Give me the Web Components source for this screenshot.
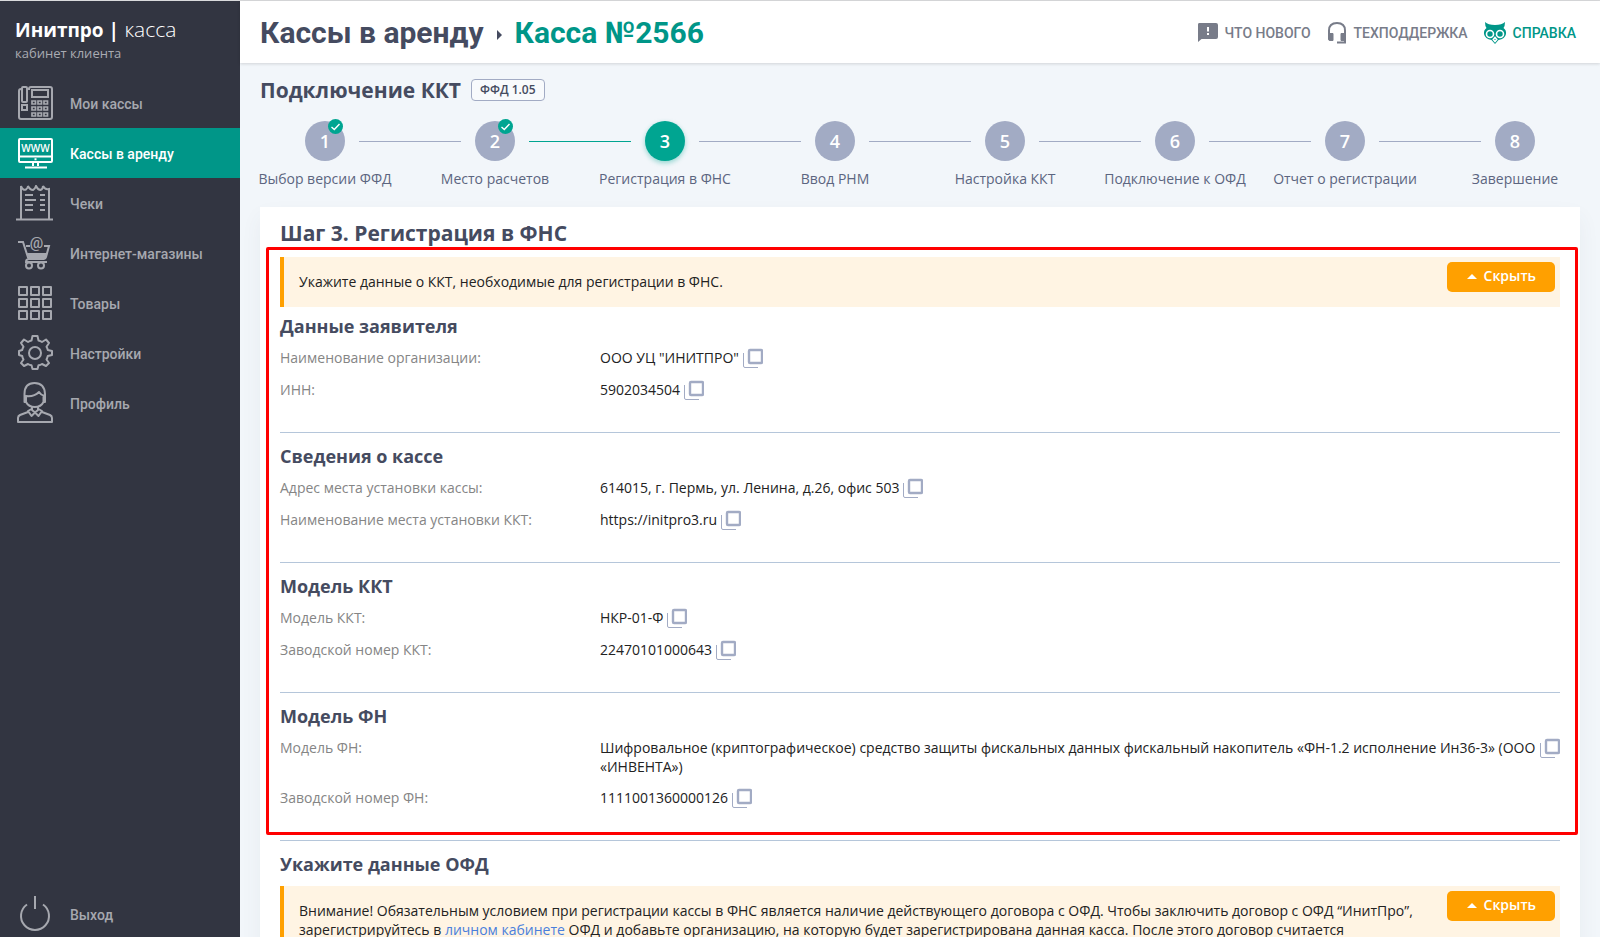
<!DOCTYPE html>
<html lang="ru">
<head>
<meta charset="utf-8">
<meta name="viewport" content="width=device-width, initial-scale=1">
<title>Инитпро | касса</title>
<style>
  html, body {
    height: 100%;
  }

  body {
    margin: 0;
    font: 14px/20px "Open Sans", "Noto Sans", sans-serif;
    color: #222;
    --green: #00a591;
    --teal: #009688;
    --slate: #454b60;
    --steel: #a2abc4;
    --orange: #ffa000;
  }
</style>
</head>
<body>
<kassa-app>
  <kassa-sidebar slot="sidebar">
    <nav-item icon="phone">Мои кассы</nav-item>
    <nav-item icon="www" active>Кассы в аренду</nav-item>
    <nav-item icon="receipt">Чеки</nav-item>
    <nav-item icon="cart">Интернет-магазины</nav-item>
    <nav-item icon="grid">Товары</nav-item>
    <nav-item icon="gear">Настройки</nav-item>
    <nav-item icon="user">Профиль</nav-item>
    <nav-item icon="power" slot="bottom">Выход</nav-item>
  </kassa-sidebar>

  <page-header slot="header">
    <a slot="parent" href="#kassy">Кассы в аренду</a>
    <span slot="current">Касса №2566</span>
    <header-link icon="news">ЧТО НОВОГО</header-link>
    <header-link icon="support">ТЕХПОДДЕРЖКА</header-link>
    <header-link icon="owl" accent>СПРАВКА</header-link>
  </page-header>

  <page-title badge="ФФД 1.05">Подключение ККТ</page-title>

  <step-list>
    <step-item number="1" done>Выбор версии ФФД</step-item>
    <step-item number="2" done before-current>Место расчетов</step-item>
    <step-item number="3" current>Регистрация в ФНС</step-item>
    <step-item number="4">Ввод РНМ</step-item>
    <step-item number="5">Настройка ККТ</step-item>
    <step-item number="6">Подключение к ОФД</step-item>
    <step-item number="7">Отчет о регистрации</step-item>
    <step-item number="8">Завершение</step-item>
  </step-list>

  <step-card heading="Шаг 3. Регистрация в ФНС">
    <marked-area>
      <info-note>Укажите данные о ККТ, необходимые для регистрации в ФНС.</info-note>
      <data-section heading="Данные заявителя" first>
        <data-row label="Наименование организации:">ООО УЦ "ИНИТПРО"</data-row>
        <data-row label="ИНН:">5902034504</data-row>
      </data-section>
      <data-section heading="Сведения о кассе">
        <data-row label="Адрес места установки кассы:">614015, г. Пермь, ул. Ленина, д.26, офис 503</data-row>
        <data-row label="Наименование места установки ККТ:">https://initpro3.ru</data-row>
      </data-section>
      <data-section heading="Модель ККТ">
        <data-row label="Модель ККТ:">НКР-01-Ф</data-row>
        <data-row label="Заводской номер ККТ:">22470101000643</data-row>
      </data-section>
      <data-section heading="Модель ФН">
        <data-row label="Модель ФН:">Шифровальное (криптографическое) средство защиты фискальных данных фискальный накопитель «ФН-1.2 исполнение Ин36-3» (ООО «ИНВЕНТА»)</data-row>
        <data-row label="Заводской номер ФН:">1111001360000126</data-row>
      </data-section>
    </marked-area>
    <data-section heading="Укажите данные ОФД">
      <info-note>Внимание! Обязательным условием при регистрации кассы в ФНС является наличие действующего договора с ОФД. Чтобы заключить договор с ОФД “ИнитПро”, зарегистрируйтесь в <a href="#ofd">личном кабинете</a> ОФД и добавьте организацию, на которую будет зарегистрирована данная касса. После этого договор считается</info-note>
    </data-section>
  </step-card>
</kassa-app>

<script>
/**
 * Icons by name. Stroked with currentColor unless stated otherwise.
 */
const icons = {
  phone: `<svg width="36" height="36" viewBox="0 0 36 36" fill="none" stroke="currentColor" stroke-width="2">
    <path d="M4 4H3Q1 4 1 6V32Q1 34 3 34H32Q34 34 34 32V4Q34 2 32 2H13Q11 2 11 4H9"/>
    <rect x="4" y="2" width="5" height="15" rx="1"/><rect x="4" y="20" width="5" height="5"/>
    <rect x="14" y="5" width="16" height="7"/>
    <path stroke-width="1.700" d="M14 16h3.500v3H14zM20 16h3.500v3H20zM26 16h3.500v3H26zM14 22h3.500v3H14zM20 22h3.500v3H20zM26 22h3.500v3H26zM14 28h3.500v3H14zM20 28h3.500v3H20zM26 28h3.500v3H26z"/></svg>`,
  www: `<svg width="36" height="36" viewBox="0 0 36 36" fill="none" stroke="currentColor" stroke-width="2">
    <rect x="1" y="4" width="33" height="23" rx="1"/><path d="M1 21.500H34M15 27v4M20 27v4M7 32.500H29M16.500 24.300h2"/>
    <text x="17.500" y="17" text-anchor="middle" font-family="Open Sans, sans-serif" font-size="10" font-weight="600" fill="currentColor" stroke="none">WWW</text></svg>`,
  receipt: `<svg width="38" height="36" viewBox="0 0 38 36" fill="none" stroke="currentColor" stroke-width="2">
    <path d="M5 34V1Q7 6 10 4.500Q12 3 12 1Q14 5 17 5Q19 4 20 1Q22 5 24.500 5Q27 4 27 1Q29 5 33 4V34M0 34.500H37"/>
    <path d="M9 10h8M24 10h5M9 15h11M24 15h5M9 20h8M24 20h5M9 25h8M24 25h5"/></svg>`,
  cart: `<svg width="36" height="36" viewBox="0 0 36 36" fill="none" stroke="currentColor" stroke-width="2">
    <path d="M0 7H5L10.500 24M8 11H12M26 11H31L28 22Q27.500 24 26 24H11Q8 24 8 27H29"/>
    <path fill="currentColor" stroke="none" d="M9 18H29.500L27.500 24H11z"/>
    <circle cx="11" cy="30.500" r="3"/><circle cx="23" cy="30.500" r="3"/>
    <text x="18.500" y="13" text-anchor="middle" font-family="Roboto, sans-serif" font-size="15" font-weight="500" fill="currentColor" stroke="none">@</text></svg>`,
  grid: `<svg width="36" height="36" viewBox="0 0 36 36" fill="none" stroke="currentColor" stroke-width="2">
    <path stroke-linejoin="round" d="M1 2h8v8H1zM13 2h8v8h-8zM25 2h8v8h-8zM1 14h8v8H1zM13 14h8v8h-8zM25 14h8v8h-8zM1 26h8v8H1zM13 26h8v8h-8zM25 26h8v8h-8z"/></svg>`,
  gear: `<svg width="36" height="36" viewBox="0 0 36 36" fill="none" stroke="currentColor" stroke-width="2" stroke-linejoin="round">
    <path d="M14.500 1H19.500L20.500 5.500Q22.500 6 24 7L28 4.500 31 8 28.500 11.800Q29.500 13.500 29.800 15L34 16V20L29.800 21Q29.300 23 28.500 24.500L31 28 28 31 24 29Q22.500 30 20.500 30.300L19.500 34H14.500L13.500 30.300Q11.500 30 10 29L6 31 3 28 5.500 24.500Q4.500 23 4.200 21L1 20V16L4.200 15Q4.500 13.500 5.500 11.800L3 8 6 4.500 10 7Q11.500 6 13.500 5.500z"/>
    <circle cx="17" cy="18" r="6"/></svg>`,
  user: `<svg width="38" height="42" viewBox="0 0 38 42" fill="none" stroke="currentColor" stroke-width="2" stroke-linejoin="round">
    <path d="M8.500 20V12Q8.500 1 18.500 1T29 12V20M10 20V14Q18 15 23 10Q25 13 27.500 13.500V20Q25 25 18.800 25T10 20M8.500 14V20L10 20M29 14V20L27.500 20"/>
    <path d="M16 24.500V28L19 30.500 22 28V24.500M15.500 27L12 29 15.500 34 19 30.500 22.500 34 26 29 22.500 27M12 30L4 33Q2 34 2 36V40H36V36Q36 34 34 33L26 30"/></svg>`,
  power: `<svg width="36" height="36" viewBox="0 0 36 36" fill="none" stroke="currentColor" stroke-width="2">
    <path d="M17 0V13M9 8.500A14 14 0 1 0 25 8.500"/></svg>`,
  news: `<svg width="22" height="22" viewBox="0 0 22 22" fill="currentColor">
    <path fill-rule="evenodd" d="M2 1H19Q21 1 21 3V15Q21 17 19 17H4.500L1 20V2.500Q1 1 2 1zM10 5V9.500H12V5zM10 11V13H12V11z"/></svg>`,
  support: `<svg width="22" height="24" viewBox="0 0 22 24" fill="none" stroke="currentColor" stroke-width="2">
    <path d="M3 13V9.500Q3 2 11 2T19 9.500V21.500H11"/>
    <path fill="currentColor" stroke-width="1" d="M2.500 12.500H7V19.500H4Q2.500 19.500 2.500 18zM15 12.500H19.500V19.500H15z"/></svg>`,
  owl: `<svg width="24" height="24" viewBox="0 0 24 24" fill="currentColor">
    <path d="M2 1Q5 4 12 4T22 1Q22 5 20.500 7Q23.500 9 23 13Q22 18 15.500 19L12 23 8.500 19Q2 18 1 13Q.500 9 3.500 7Q2 5 2 1z"/>
    <g fill="none" stroke="#fff" stroke-width="1.600"><circle cx="7" cy="13" r="3.500"/><circle cx="17" cy="13" r="3.500"/><path d="M12 16.500L10.300 18.500 12 20.500 13.700 18.500z"/></g></svg>`
}

// The frame: sidebar on the left, header and scrolling content on the right
const appTemplate = document.createElement('template')
appTemplate.innerHTML = `
<style>
  :host {
    display: grid;
    grid-template-columns: 240px minmax(0, 1fr);
    height: 100vh;
    box-sizing: border-box;
    border-top: 1px solid #d9dadc;
  }

  .page {
    display: flex;
    flex-direction: column;
    min-height: 0;
    background: #f2f6fa;
  }

  main {
    flex: 1;
    min-height: 0;
    overflow: auto;
    scrollbar-width: none;
  }
</style>
<slot name="sidebar"></slot>
<div class="page">
  <slot name="header"></slot>
  <main><slot></slot></main>
</div>
`
customElements.define('kassa-app',
  class extends HTMLElement {
    constructor () {
      super()
      this.attachShadow({ mode: 'open' }).appendChild(appTemplate.content.cloneNode(true))
    }
  }
)

const sidebarTemplate = document.createElement('template')
sidebarTemplate.innerHTML = `
<style>
  :host {
    display: flex;
    flex-direction: column;
    background: #323541;
    color: #fff;
  }

  .brand {
    padding: 15px;
  }

  .name {
    font-size: 21px;
    font-weight: 300;
    line-height: 26px;
  }

  .name b {
    font-size: 19px;
    font-weight: 700;
  }

  .sub {
    font-size: 13px;
    line-height: 20px;
    color: #a9abb2;
  }

  nav {
    flex: 1;
    display: flex;
    flex-direction: column;
  }

  .bottom {
    margin-top: auto;
  }
</style>
<div class="brand">
  <div class="name"><b>Инитпро |</b> касса</div>
  <div class="sub">кабинет клиента</div>
</div>
<nav>
  <slot></slot>
  <div class="bottom"><slot name="bottom"></slot></div>
</nav>
`
customElements.define('kassa-sidebar',
  class extends HTMLElement {
    constructor () {
      super()
      this.attachShadow({ mode: 'open' }).appendChild(sidebarTemplate.content.cloneNode(true))
    }
  }
)

const navItemTemplate = document.createElement('template')
navItemTemplate.innerHTML = `
<style>
  :host {
    display: block;
  }

  a {
    display: grid;
    grid-template-columns: 38px 1fr;
    gap: 16px;
    align-items: center;
    height: 50px;
    padding-left: 16px;
    font: 500 14px/20px Roboto, sans-serif;
    color: #a6a8af;
    text-decoration: none;
  }

  :host([slot="bottom"]) a {
    height: 46px;
  }

  :host([active]) a {
    background: var(--teal);
    color: #fff;
  }

  .icon {
    display: flex;
    padding-left: 2px;
  }

  :host([icon="receipt"]) .icon, :host([icon="user"]) .icon {
    padding-left: 0;
  }

  .text {
    padding-top: 2px;
  }
</style>
<a href="#"><span class="icon"></span><span class="text"><slot></slot></span></a>
`
customElements.define('nav-item',
  class extends HTMLElement {
    constructor () {
      super()
      this.attachShadow({ mode: 'open' }).appendChild(navItemTemplate.content.cloneNode(true))
    }

    connectedCallback () {
      this.shadowRoot.querySelector('.icon').innerHTML = icons[this.getAttribute('icon')]
    }
  }
)

const headerTemplate = document.createElement('template')
headerTemplate.innerHTML = `
<style>
  :host {
    display: block;
    position: relative;
    background: #fff;
    box-shadow: 0 1px 3px rgba(0, 0, 0, .14);
  }

  header {
    display: flex;
    align-items: center;
    justify-content: space-between;
    height: 60px;
    padding: 2px 24px 0 20px;
  }

  h1 {
    display: flex;
    align-items: center;
    gap: 13px;
    margin: 0;
    font: 700 30px/40px Roboto, sans-serif;
    color: var(--teal);
  }

  .arrow {
    margin-top: 4px;
    border: 5px solid transparent;
    border-left-color: var(--slate);
    border-right: 0;
  }

  ::slotted([slot="parent"]) {
    color: var(--slate);
    text-decoration: none;
  }

  nav {
    display: flex;
    gap: 15px;
  }
</style>
<header>
  <h1><slot name="parent"></slot><span class="arrow"></span><slot name="current"></slot></h1>
  <nav><slot></slot></nav>
</header>
`
customElements.define('page-header',
  class extends HTMLElement {
    constructor () {
      super()
      this.attachShadow({ mode: 'open' }).appendChild(headerTemplate.content.cloneNode(true))
    }
  }
)

const headerLinkTemplate = document.createElement('template')
headerLinkTemplate.innerHTML = `
<style>
  :host {
    display: block;
  }

  a {
    display: flex;
    align-items: center;
    gap: 6px;
    font: 500 14px/24px Roboto, sans-serif;
    color: #787c89;
    text-decoration: none;
  }

  :host([accent]) a {
    color: var(--teal);
  }

  .icon {
    display: flex;
  }
</style>
<a href="#"><span class="icon"></span><slot></slot></a>
`
customElements.define('header-link',
  class extends HTMLElement {
    constructor () {
      super()
      this.attachShadow({ mode: 'open' }).appendChild(headerLinkTemplate.content.cloneNode(true))
    }

    connectedCallback () {
      this.shadowRoot.querySelector('.icon').innerHTML = icons[this.getAttribute('icon')]
    }
  }
)

const titleTemplate = document.createElement('template')
titleTemplate.innerHTML = `
<style>
  :host {
    display: flex;
    align-items: center;
    gap: 10px;
    padding: 12px 20px 16px;
  }

  h2 {
    margin: 0;
    font-size: 21px;
    font-weight: 700;
    line-height: 30px;
    color: var(--slate);
  }

  .badge {
    border: 1px solid var(--steel);
    border-radius: 4px;
    padding: 0 8px;
    font-size: 12px;
    font-weight: 600;
    line-height: 20px;
    color: var(--slate);
    background: #f8fafc;
  }
</style>
<h2><slot></slot></h2>
<span class="badge"></span>
`
customElements.define('page-title',
  class extends HTMLElement {
    constructor () {
      super()
      this.attachShadow({ mode: 'open' }).appendChild(titleTemplate.content.cloneNode(true))
    }

    connectedCallback () {
      this.shadowRoot.querySelector('.badge').textContent = this.getAttribute('badge')
    }
  }
)

const stepListTemplate = document.createElement('template')
stepListTemplate.innerHTML = `
<style>
  :host {
    display: flex;
    padding-bottom: 18px;
  }
</style>
<slot></slot>
`
customElements.define('step-list',
  class extends HTMLElement {
    constructor () {
      super()
      this.attachShadow({ mode: 'open' }).appendChild(stepListTemplate.content.cloneNode(true))
    }
  }
)

// A step draws its circle and the half of the line on each side of it
const stepTemplate = document.createElement('template')
stepTemplate.innerHTML = `
<style>
  :host {
    flex: 1 1 0;
    min-width: 0;
    text-align: center;
    color: #5c6580;
  }

  .track {
    display: flex;
    align-items: center;
    gap: 14px;
    margin-bottom: 8px;
  }

  .line {
    flex: 1;
    height: 1px;
    background: var(--steel);
  }

  :host(:first-child) .left, :host(:last-child) .right {
    visibility: hidden;
  }

  :host([current]) .left, :host([before-current]) .right {
    background: var(--green);
  }

  .circle {
    position: relative;
    width: 40px;
    border-radius: 50%;
    background: var(--steel);
    color: #fff;
    font-size: 18px;
    font-weight: 600;
    line-height: 40px;
  }

  :host([current]) .circle {
    background: var(--green);
    box-shadow: 0 2px 5px rgba(0, 165, 145, .4);
  }

  .check {
    display: none;
    position: absolute;
    top: -2px;
    right: 2px;
  }

  :host([done]) .check {
    display: block;
  }

  .label {
    white-space: nowrap;
  }
</style>
<div class="track">
  <span class="line left"></span>
  <div class="circle"><span class="number"></span>
    <svg class="check" width="15" height="15" viewBox="0 0 15 15"><circle cx="7.500" cy="7.500" r="7.500" fill="#00a591"/><path d="M3.500 8L6.300 10.500 11.500 5" fill="none" stroke="#fff" stroke-width="1.400"/></svg>
  </div>
  <span class="line right"></span>
</div>
<div class="label"><slot></slot></div>
`
customElements.define('step-item',
  class extends HTMLElement {
    constructor () {
      super()
      this.attachShadow({ mode: 'open' }).appendChild(stepTemplate.content.cloneNode(true))
    }

    connectedCallback () {
      this.shadowRoot.querySelector('.number').textContent = this.getAttribute('number')
    }
  }
)

const cardTemplate = document.createElement('template')
cardTemplate.innerHTML = `
<style>
  :host {
    display: block;
    margin: 0 20px;
    padding: 11px 20px 20px;
    background: #fff;
    box-shadow: 0 10px 20px rgba(60, 80, 110, .06);
  }

  h2 {
    margin: 0 0 9px;
    font-size: 21px;
    font-weight: 700;
    line-height: 30px;
    color: var(--slate);
  }
</style>
<h2></h2>
<slot></slot>
`
customElements.define('step-card',
  class extends HTMLElement {
    constructor () {
      super()
      this.attachShadow({ mode: 'open' }).appendChild(cardTemplate.content.cloneNode(true))
    }

    connectedCallback () {
      this.shadowRoot.querySelector('h2').textContent = this.getAttribute('heading')
    }
  }
)

// Red frame laid over a part of the card
const markedTemplate = document.createElement('template')
markedTemplate.innerHTML = `
<style>
  :host {
    display: block;
    position: relative;
  }

  .frame {
    position: absolute;
    inset: -10px -18px 5px -14px;
    border: 3px solid #f00;
    border-radius: 2px;
    pointer-events: none;
  }
</style>
<slot></slot>
<div class="frame"></div>
`
customElements.define('marked-area',
  class extends HTMLElement {
    constructor () {
      super()
      this.attachShadow({ mode: 'open' }).appendChild(markedTemplate.content.cloneNode(true))
    }
  }
)

const noteTemplate = document.createElement('template')
noteTemplate.innerHTML = `
<style>
  :host {
    display: flex;
    align-items: flex-start;
    justify-content: space-between;
    gap: 20px;
    border-left: 4px solid var(--orange);
    padding: 5px 5px 5px 15px;
    background: #fff4e3;
    line-height: 19px;
  }

  p {
    margin: 0;
    padding: 10px 0 11px;
  }

  button {
    display: flex;
    align-items: center;
    gap: 7px;
    flex: none;
    height: 30px;
    border: 0;
    border-radius: 5px;
    padding: 0 19px 2px 20px;
    background: var(--orange);
    color: #fff;
    font: 600 14px/20px "Open Sans", sans-serif;
  }

  .up {
    border: 5px solid transparent;
    border-bottom-color: #fff;
    border-top: 0;
  }

  ::slotted(a) {
    color: #4a7fdc;
    text-decoration: none;
  }
</style>
<p><slot></slot></p>
<button type="button"><span class="up"></span>Скрыть</button>
`
customElements.define('info-note',
  class extends HTMLElement {
    #button

    constructor () {
      super()
      this.attachShadow({ mode: 'open' }).appendChild(noteTemplate.content.cloneNode(true))
      this.#button = this.shadowRoot.querySelector('button')
      this.#button.addEventListener('click', () => this.remove())
    }
  }
)

const sectionTemplate = document.createElement('template')
sectionTemplate.innerHTML = `
<style>
  :host {
    display: block;
    padding: 10px 0 32px;
    border-top: 1px solid #b5c6da;
  }

  :host([first]) {
    padding-top: 6px;
    border-top: 0;
  }

  h3 {
    margin: 0 0 9px;
    font-size: 18px;
    font-weight: 700;
    line-height: 26px;
    color: var(--slate);
  }

  .rows {
    display: grid;
    gap: 12px;
  }
</style>
<h3></h3>
<div class="rows"><slot></slot></div>
`
customElements.define('data-section',
  class extends HTMLElement {
    constructor () {
      super()
      this.attachShadow({ mode: 'open' }).appendChild(sectionTemplate.content.cloneNode(true))
    }

    connectedCallback () {
      this.shadowRoot.querySelector('h3').textContent = this.getAttribute('heading')
    }
  }
)

const rowTemplate = document.createElement('template')
rowTemplate.innerHTML = `
<style>
  :host {
    display: grid;
    grid-template-columns: 1fr 3fr;
    min-height: 20px;
    line-height: 19px;
  }

  .label {
    color: #858585;
  }

  .value {
    display: flex;
    align-items: flex-start;
    gap: 4px;
  }

  button {
    display: flex;
    flex: none;
    border: 0;
    padding: 0;
    background: none;
    color: var(--steel);
  }
</style>
<div class="label"></div>
<div class="value">
  <span><slot></slot></span>
  <button type="button" aria-label="Скопировать">
    <svg width="20" height="20" viewBox="0 0 20 20" fill="none" stroke="currentColor"><rect x="6" y="2" width="13" height="13" rx="1" stroke-width="2.400"/><path d="M.500 5V18Q.500 19.500 2 19.500H15"/></svg>
  </button>
</div>
`
customElements.define('data-row',
  class extends HTMLElement {
    constructor () {
      super()
      this.attachShadow({ mode: 'open' }).appendChild(rowTemplate.content.cloneNode(true))
      this.shadowRoot.querySelector('button').addEventListener('click', () => {
        navigator.clipboard?.writeText(this.textContent)
      })
    }

    connectedCallback () {
      this.shadowRoot.querySelector('.label').textContent = this.getAttribute('label')
    }
  }
)
</script>
</body>
</html>
